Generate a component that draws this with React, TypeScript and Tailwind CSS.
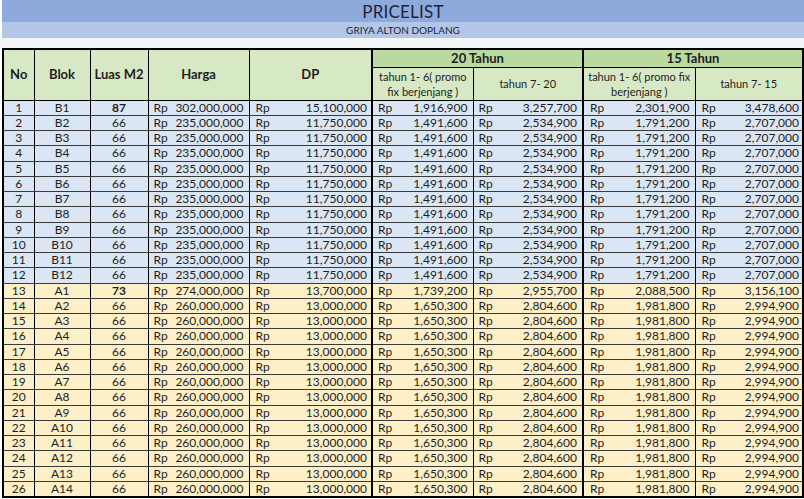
import React from "react";

type Row = [string, string, string, string, string, string, string, string, string, boolean];

const rows: Row[] = [];
rows.push(["1", "B1", "87", "302,000,000", "15,100,000", "1,916,900", "3,257,700", "2,301,900", "3,478,600", true]);
for (let i = 2; i <= 12; i++) {
  rows.push([String(i), "B" + i, "66", "235,000,000", "11,750,000", "1,491,600", "2,534,900", "1,791,200", "2,707,000", true]);
}
rows.push(["13", "A1", "73", "274,000,000", "13,700,000", "1,739,200", "2,955,700", "2,088,500", "3,156,100", false]);
for (let i = 2; i <= 14; i++) {
  rows.push([String(i + 12), "A" + i, "66", "260,000,000", "13,000,000", "1,650,300", "2,804,600", "1,981,800", "2,994,900", false]);
}

function Money({ v, pl = "pl-[5px]", pr = "pr-[4px]" }: { v: string; pl?: string; pr?: string }) {
  return (
    <div className={`flex justify-between items-center h-full ${pl} ${pr}`}>
      <span>Rp</span>
      <span>{v}</span>
    </div>
  );
}

export default function App() {
  return (
    <div
      className="w-[804px] h-[499px] bg-white overflow-hidden text-[#1e1e1e]"
      style={{ fontFamily: "Lato, 'Open Sans', sans-serif" }}
    >
      <div className="ml-[2px] h-[22px] bg-[#8eaadc] flex items-center justify-center">
        <span className="text-[17px] leading-none text-[#1b2437] tracking-[0.2px]">PRICELIST</span>
      </div>
      <div className="ml-[2px] h-[16px] bg-[#b3c6e8] flex items-center justify-center">
        <span className="text-[10px] leading-none text-[#1b2437]">GRIYA ALTON DOPLANG</span>
      </div>
      <div className="h-[10px] bg-[#f3f6f6]" />
      <table className="ml-[2px] border-collapse table-fixed w-[800px] text-[12px] leading-none border-2 border-black">
        <colgroup>
          <col className="w-[31px]" />
          <col className="w-[56px]" />
          <col className="w-[58px]" />
          <col className="w-[101px]" />
          <col className="w-[123px]" />
          <col className="w-[101px]" />
          <col className="w-[110px]" />
          <col className="w-[112px]" />
          <col className="w-[108px]" />
        </colgroup>
        <thead>
          <tr className="h-[18px]">
            <th rowSpan={2} className="bg-[#d7e8c4] border border-black text-[13px] font-bold">No</th>
            <th rowSpan={2} className="bg-[#d7e8c4] border border-black text-[13px] font-bold">Blok</th>
            <th rowSpan={2} className="bg-[#d7e8c4] border border-black text-[13px] font-bold">Luas M2</th>
            <th rowSpan={2} className="bg-[#d7e8c4] border border-black text-[13px] font-bold">Harga</th>
            <th rowSpan={2} className="bg-[#d7e8c4] border border-black text-[13px] font-bold">DP</th>
            <th colSpan={2} className="bg-[#b9d99f] border border-black border-l-2 text-[13px] font-bold">20 Tahun</th>
            <th colSpan={2} className="bg-[#b9d99f] border border-black border-l-2 text-[13px] font-bold">15 Tahun</th>
          </tr>
          <tr className="h-[33px]">
            <th className="bg-[#d7e8c4] border border-black border-l-2 font-normal text-[11px] leading-[15px] px-1">
              tahun 1- 6( promo
              <br />
              fix berjenjang )
            </th>
            <th className="bg-[#d7e8c4] border border-black font-normal text-[11px]">tahun 7- 20</th>
            <th className="bg-[#d7e8c4] border border-black border-l-2 font-normal text-[11px] leading-[15px] px-1">
              tahun 1- 6( promo fix
              <br />
              berjenjang )
            </th>
            <th className="bg-[#d7e8c4] border border-black font-normal text-[11px]">tahun 7- 15</th>
          </tr>
        </thead>
        <tbody>
          {rows.map((r) => {
            const bg = r[9] ? "bg-[#dae6f3]" : "bg-[#fdf0c8]";
            const cell = "border-x border-black border-b border-b-[#3a3a3a] p-0";
            return (
              <tr key={r[0]} className={`h-[15.25px] ${bg}`}>
                <td className={`${cell} text-center`}>{r[0]}</td>
                <td className={`${cell} text-center`}>{r[1]}</td>
                <td className={`${cell} text-center ${r[2] !== "66" ? "font-bold" : ""}`}>{r[2]}</td>
                <td className={cell}>
                  <Money v={r[3]} pl="pl-[5px]" pr="pr-[5px]" />
                </td>
                <td className={cell}>
                  <Money v={r[4]} pl="pl-[6px]" pr="pr-[4px]" />
                </td>
                <td className={`${cell} border-l-2`}>
                  <Money v={r[5]} pl="pl-[5px]" pr="pr-[5px]" />
                </td>
                <td className={cell}>
                  <Money v={r[6]} pl="pl-[5px]" pr="pr-[5px]" />
                </td>
                <td className={`${cell} border-l-2`}>
                  <Money v={r[7]} pl="pl-[6px]" pr="pr-[5px]" />
                </td>
                <td className={cell}>
                  <Money v={r[8]} pl="pl-[6px]" pr="pr-[3px]" />
                </td>
              </tr>
            );
          })}
        </tbody>
      </table>
    </div>
  );
}
